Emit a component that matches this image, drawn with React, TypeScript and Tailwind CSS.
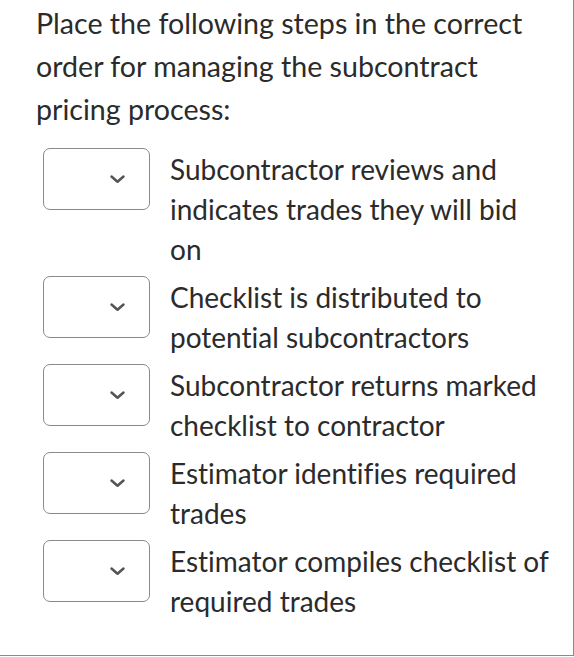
import React from 'react';

const steps = [
  'Subcontractor reviews and indicates trades they will bid on',
  'Checklist is distributed to potential subcontractors',
  'Subcontractor returns marked checklist to contractor',
  'Estimator identifies required trades',
  'Estimator compiles checklist of required trades',
];

function Chevron() {
  return (
    <svg width="17" height="10" viewBox="0 0 17 10" fill="none">
      <path d="M2.5 2.5l6 5.3 6-5.3" stroke="#555" strokeWidth="2.5" strokeLinecap="round" strokeLinejoin="round" />
    </svg>
  );
}

export default function App() {
  return (
    <div
      className="w-[574px] h-[656px] bg-white border-r border-b border-[#8a8a8a] text-[#2b2b2b] [font-variant-ligatures:none]"
      style={{ fontFamily: 'Lato, "Open Sans", sans-serif' }}
    >
      {/* Question */}
      <div className="pl-[36px] pr-[14px] pt-[2px] text-[28.6px] leading-[43px]">
        Place the following steps in the correct order for managing the subcontract pricing process:
      </div>

      {/* Ordering rows */}
      <div className="pl-[43px] pr-[20px] mt-[17px] flex flex-col gap-[7px]">
        {steps.map((s) => (
          <div key={s} className="flex items-start gap-[20px]">
            <div className="w-[107px] h-[62px] shrink-0 rounded-[7px] border border-[#8a8a8a] bg-white flex items-center justify-end pr-[23px]">
              <Chevron />
            </div>
            <div className="text-[28px] leading-[40px] pt-[1px]">{s}</div>
          </div>
        ))}
      </div>
    </div>
  );
}
